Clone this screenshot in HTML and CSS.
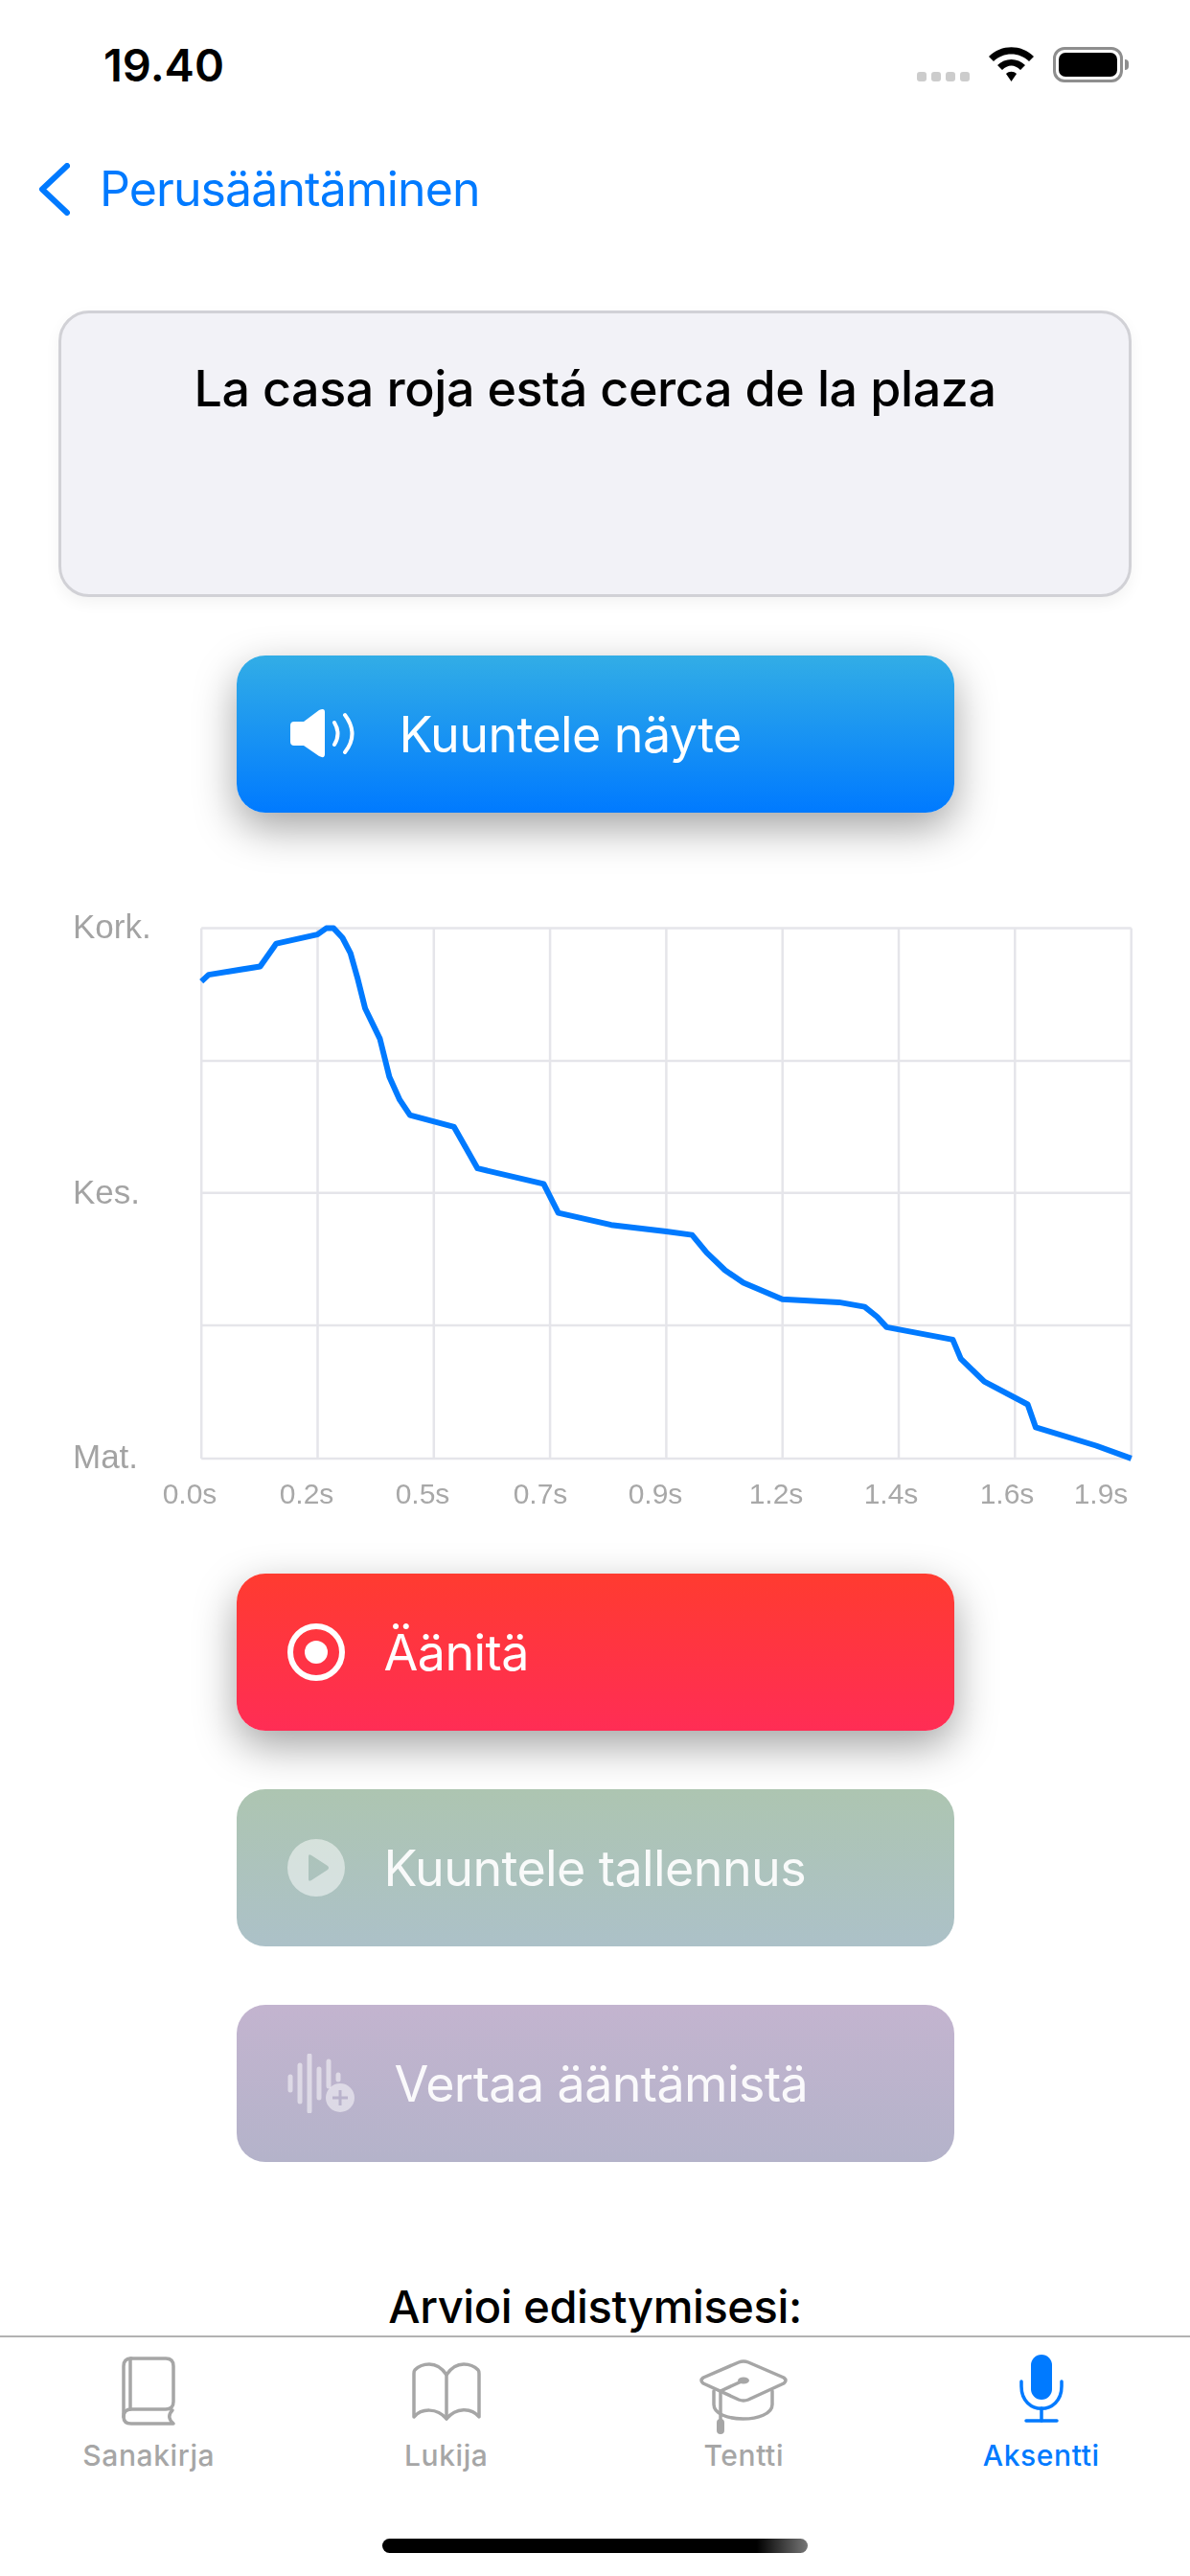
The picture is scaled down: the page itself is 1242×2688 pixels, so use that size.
FILE: index.html
```html
<!DOCTYPE html>
<html lang="fi">
<head>
    <meta charset="UTF-8">
    <meta name="viewport" content="width=device-width, initial-scale=1.0">
    <title>Aksentti</title>
    <link rel="stylesheet" href="styles.css">
</head>
<body>
    <div class="phone">
        <div class="status-bar">
            <span class="clock">19.40</span>
            <div class="status-icons">
                <div class="signal"><i></i><i></i><i></i><i></i></div>
                <svg class="wifi" width="47" height="36" viewBox="0 0 47 36">
                    <path d="M0 10 C13 -3 34 -3 47 10 L42 15 C32 5 15 5 5 15 Z"/>
                    <path d="M9 19 C17 11 30 11 38 19 L33 24 C27 18 20 18 14 24 Z"/>
                    <path d="M18 28 C21 25 26 25 29 28 L23.5 36 Z"/>
                </svg>
                <div class="battery"><div class="battery-fill"></div></div>
                <div class="battery-cap"></div>
            </div>
        </div>

        <div class="nav-bar">
            <svg class="back-icon" width="33" height="55" viewBox="0 0 33 55">
                <path d="M30 3 L4 27.5 L30 52"/>
            </svg>
            <span class="nav-title">Perusääntäminen</span>
        </div>

        <div class="phrase-card">La casa roja está cerca de la plaza</div>

        <button class="action-btn btn-listen">
            <svg class="btn-icon icon-speaker" width="68" height="54" viewBox="0 0 68 54">
                <path class="fill-white" d="M0 18 Q0 14 4 14 H14 L30 2 Q36 -1 36 4 V48 Q36 53 30 50 L14 39 H4 Q0 39 0 35 Z"/>
                <path class="stroke-thin" d="M46 15 Q53 26.500 46 38"/>
                <path class="stroke-thin" d="M57 7 Q72 27 57 46"/>
            </svg>
            Kuuntele näyte
        </button>

        <div class="chart">
            <svg width="1202" height="670" viewBox="0 0 1202 670">
                <g class="grid">
                    <path d="M170.2 48.6 V601.9"/>
                    <path d="M291.5 48.6 V601.9"/>
                    <path d="M412.8 48.6 V601.9"/>
                    <path d="M534.1 48.6 V601.9"/>
                    <path d="M655.4 48.6 V601.9"/>
                    <path d="M776.7 48.6 V601.9"/>
                    <path d="M898 48.6 V601.9"/>
                    <path d="M1019.3 48.6 V601.9"/>
                    <path d="M1140.7 48.6 V601.9"/>
                    <path d="M170.2 48.6 H1140.7"/>
                    <path d="M170.2 186.9 H1140.7"/>
                    <path d="M170.2 324.8 H1140.7"/>
                    <path d="M170.2 463.1 H1140.7"/>
                    <path d="M170.2 601.9 H1140.7"/>
                </g>
                <polyline class="pitch-line" points="170.2,104.1 177.8,97.1 231.5,88.5 248.4,64.6 291.3,55.1 300.5,48.6 308.2,48.6 317.4,58.5 325.8,74.6 333.5,101.9 341.1,132.3 356.5,163.9 366.4,203.8 377.2,227.7 387.9,243.7 433.9,255.9 446.1,277.5 458.4,299.2 527.4,315.3 542.7,345.6 597.9,358.2 655.4,365.1 682.3,368.6 697.6,387.2 716.8,405.5 735.9,418.5 751.2,425 776.5,435.8 835.6,438.9 862.4,443.6 875.4,454 885.4,464.9 954.4,477.9 962.8,497.8 987.3,521.7 1032.6,545.5 1041,569.4 1103.9,588.5 1140.7,601.9"/>
                <g class="axis-y">
                    <text x="36" y="59">Kork.</text>
                    <text x="36" y="336">Kes.</text>
                    <text x="36" y="612">Mat.</text>
                </g>
                <g class="axis-x">
                    <text x="158" y="649">0.0s</text>
                    <text x="280" y="649">0.2s</text>
                    <text x="401" y="649">0.5s</text>
                    <text x="524" y="649">0.7s</text>
                    <text x="644" y="649">0.9s</text>
                    <text x="770" y="649">1.2s</text>
                    <text x="890" y="649">1.4s</text>
                    <text x="1011" y="649">1.6s</text>
                    <text x="1109" y="649">1.9s</text>
                </g>
            </svg>
        </div>

        <button class="action-btn btn-record">
            <svg class="btn-icon" width="60" height="60" viewBox="0 0 60 60">
                <circle class="stroke-white" cx="30" cy="30" r="27"/>
                <circle class="fill-white" cx="30" cy="30" r="12"/>
            </svg>
            Äänitä
        </button>

        <button class="action-btn btn-play">
            <svg class="btn-icon" width="60" height="60" viewBox="0 0 60 60">
                <path class="fill-dim" fill-rule="evenodd" d="M30 0 A30 30 0 1 1 30 60 A30 30 0 1 1 30 0 Z M22 18 V42 Q22 45 25 43 L42 32 Q44 30 42 28 L25 17 Q22 15 22 18 Z"/>
            </svg>
            Kuuntele tallennus
        </button>

        <button class="action-btn btn-compare">
            <svg class="btn-icon icon-wave" width="70" height="62" viewBox="0 0 70 62">
                <g class="wave-bars">
                    <path d="M3 24 V38"/>
                    <path d="M13 12 V50"/>
                    <path d="M23 2 V60"/>
                    <path d="M33 16 V46"/>
                    <path d="M43 8 V34"/>
                    <path d="M53 22 V27"/>
                </g>
                <path class="fill-dim" fill-rule="evenodd" d="M55 31 A15 15 0 1 1 55 61 A15 15 0 1 1 55 31 Z M53.5 38 V44.500 H47 V47.500 H53.500 V54 H56.500 V47.500 H63 V44.500 H56.500 V38 Z"/>
            </svg>
            Vertaa ääntämistä
        </button>

        <div class="rating-title">Arvioi edistymisesi:</div>

        <div class="tab-bar">
            <div class="tab">
                <svg width="56" height="84" viewBox="0 -2 56 84">
                    <path d="M10 2 H46 Q54 2 54 10 V47 Q54 55 46 55 H10 Q2 55 2 63 Q2 70 10 70 H54 Q46 63 53 56"/>
                    <path d="M2 63 V10 Q2 2 10 2"/>
                    <path d="M9 2 V55"/>
                </svg>
                <span>Sanakirja</span>
            </div>
            <div class="tab">
                <svg width="72" height="84" viewBox="0 -8 72 84">
                    <path d="M36 13 C30 4 24 2 18 2 C12 2 7 4 3 8 Q2 9 2 12 V57 C10 48 26 47 36 59 C46 47 62 47 70 57 V12 Q70 9 69 8 C65 4 60 2 54 2 C48 2 42 4 36 13 Z"/>
                    <path d="M36 13 V59"/>
                </svg>
                <span>Lukija</span>
            </div>
            <div class="tab">
                <svg width="92" height="84" viewBox="0 -6 92 84">
                    <path d="M41 2 Q46 0 51 2 L88 18 Q92 21 88 24 L51 41 Q46 43 41 41 L4 24 Q0 21 4 18 Z"/>
                    <path d="M15 32 V46 C15 66 76 66 76 46 V32"/>
                    <path d="M46 21 L22 32 V62"/>
                    <ellipse class="tab-fill" cx="46" cy="21" rx="6" ry="3.500"/>
                    <rect class="tab-fill" x="18" y="61" width="8" height="16" rx="4"/>
                </svg>
                <span>Tentti</span>
            </div>
            <div class="tab tab-active">
                <svg width="46" height="84" viewBox="0 0 46 84">
                    <rect class="tab-fill" x="12" y="0" width="22" height="47" rx="11"/>
                    <path d="M2 28 V33 C2 64 44 64 44 33 V28"/>
                    <path d="M23 56 V69"/>
                    <path d="M7 69 H39"/>
                </svg>
                <span>Aksentti</span>
            </div>
        </div>

        <div class="home-indicator"></div>
    </div>
</body>
</html>
```

FILE: styles.css
```css
* {
    margin: 0;
    padding: 0;
    box-sizing: border-box;
    font-family: Inter, "Liberation Sans", sans-serif;
}

body {
    background-color: white;
    width: 1242px;
    height: 2688px;
    overflow: hidden;
}

.phone {
    position: relative;
    height: 2688px;
    display: flex;
    flex-direction: column;
    align-items: center;
}

.status-bar {
    width: 100%;
    height: 136px;
    padding: 40px 64px 0 108px;
    display: flex;
    justify-content: space-between;
    align-items: flex-start;
}

.clock {
    font-size: 47px;
    font-weight: 600;
    line-height: 56px;
    color: black;
}

.status-icons {
    display: flex;
    align-items: flex-start;
    margin-top: 9px;
}

.signal {
    display: flex;
    gap: 5px;
    margin-top: 26px;
    margin-right: 20px;
}

.signal i {
    width: 10px;
    height: 10px;
    border-radius: 3px;
    background-color: #cccccc;
}

.wifi {
    margin-right: 20px;
}

.battery {
    width: 73px;
    height: 37px;
    border: 3px solid #8e8e8e;
    border-radius: 12px;
    padding: 3px;
}

.battery-fill {
    height: 100%;
    border-radius: 7px;
    background-color: black;
}

.battery-cap {
    width: 4px;
    height: 11px;
    margin: 13px 0 0 2px;
    border-radius: 0 4px 4px 0;
    background-color: #8e8e8e;
}

.nav-bar {
    width: 100%;
    height: 188px;
    padding: 31px 0 0 40px;
    display: flex;
    align-items: flex-start;
    gap: 31px;
}

.back-icon {
    margin-top: 3px;
}

.back-icon path {
    fill: none;
    stroke: #007aff;
    stroke-width: 6;
    stroke-linecap: round;
    stroke-linejoin: round;
}

.nav-title {
    font-size: 50px;
    line-height: 60px;
    letter-spacing: -0.9px;
    color: #007aff;
}

.phrase-card {
    width: 1120px;
    height: 299px;
    padding-top: 46px;
    flex-shrink: 0;
    text-align: center;
    font-size: 52px;
    font-weight: 500;
    line-height: 66px;
    letter-spacing: -0.4px;
    color: black;
    background-color: #f2f2f7;
    border: 3px solid #d1d1d6;
    border-radius: 32px;
    box-shadow: 0 6px 16px rgba(0,0,0,0.05);
}

.action-btn {
    width: 749px;
    height: 164px;
    flex-shrink: 0;
    padding-left: 53px;
    display: flex;
    align-items: center;
    border: none;
    border-radius: 30px;
    font-size: 52px;
    letter-spacing: -0.6px;
    color: white;
}

.btn-icon {
    flex-shrink: 0;
    margin-right: 41px;
}

.icon-speaker {
    margin: 0 46px 0 3px;
}

.icon-wave {
    margin-right: 42px;
    margin-left: 0;
}

.fill-white {
    fill: white;
}

.stroke-white {
    fill: none;
    stroke: white;
    stroke-width: 6;
    stroke-linecap: round;
}

.stroke-thin {
    fill: none;
    stroke: white;
    stroke-width: 4;
    stroke-linecap: round;
}

.fill-dim {
    fill: rgba(255,255,255,0.5);
}

.wave-bars path {
    fill: none;
    stroke: rgba(255,255,255,0.5);
    stroke-width: 5;
    stroke-linecap: round;
}

.btn-listen {
    margin-top: 61px;
    background: linear-gradient(#32ade6, #007aff);
    box-shadow: 0 16px 44px rgba(0,0,0,0.36);
}

.chart {
    align-self: flex-start;
    margin-top: 72px;
    margin-left: 40px;
    height: 650px;
    flex-shrink: 0;
    filter: blur(0.6px);
}

.grid path {
    fill: none;
    stroke: #e5e5ea;
    stroke-width: 2.500;
}

.pitch-line {
    fill: none;
    stroke: #007aff;
    stroke-width: 6;
    stroke-linejoin: round;
}

.axis-y text {
    font-family: "Liberation Sans", sans-serif;
    font-size: 35px;
    fill: #a3a3a3;
}

.axis-x text {
    font-family: "Liberation Sans", sans-serif;
    font-size: 30px;
    fill: #a8a8a8;
    text-anchor: middle;
}

.btn-record {
    margin-top: 72px;
    background: linear-gradient(#ff3b30, #ff2d55);
    box-shadow: 0 16px 44px rgba(0,0,0,0.36);
}

.btn-play {
    margin-top: 61px;
    background: linear-gradient(#adc5b1, #acc1c8);
    color: rgba(255,255,255,0.92);
}

.btn-compare {
    margin-top: 61px;
    background: linear-gradient(#c3b4cf, #b4b3ca);
    color: rgba(255,255,255,0.92);
}

.rating-title {
    margin-top: 123px;
    font-size: 47px;
    font-weight: 500;
    line-height: 56px;
    letter-spacing: -0.4px;
    color: black;
}

.tab-bar {
    position: absolute;
    left: 0;
    right: 0;
    top: 2437px;
    height: 251px;
    padding-top: 18px;
    display: flex;
    background-color: white;
    border-top: 2px solid #b2b2b2;
}

.tab {
    flex: 1;
    display: flex;
    flex-direction: column;
    align-items: center;
    gap: 3px;
    color: #a6a6a6;
    font-size: 30px;
    font-weight: 500;
    line-height: 36px;
    letter-spacing: 0.6px;
}

.tab svg {
    fill: none;
    stroke: #a6a6a6;
    stroke-width: 3.500;
    stroke-linecap: round;
    stroke-linejoin: round;
}

.tab .tab-fill {
    fill: #a6a6a6;
    stroke: none;
}

.tab-active {
    color: #007aff;
}

.tab-active svg {
    stroke: #007aff;
}

.tab-active .tab-fill {
    fill: #007aff;
}

.home-indicator {
    position: absolute;
    left: 399px;
    top: 2649px;
    width: 444px;
    height: 15px;
    border-radius: 8px;
    background: linear-gradient(90deg, black 88%, #777777);
}
```
